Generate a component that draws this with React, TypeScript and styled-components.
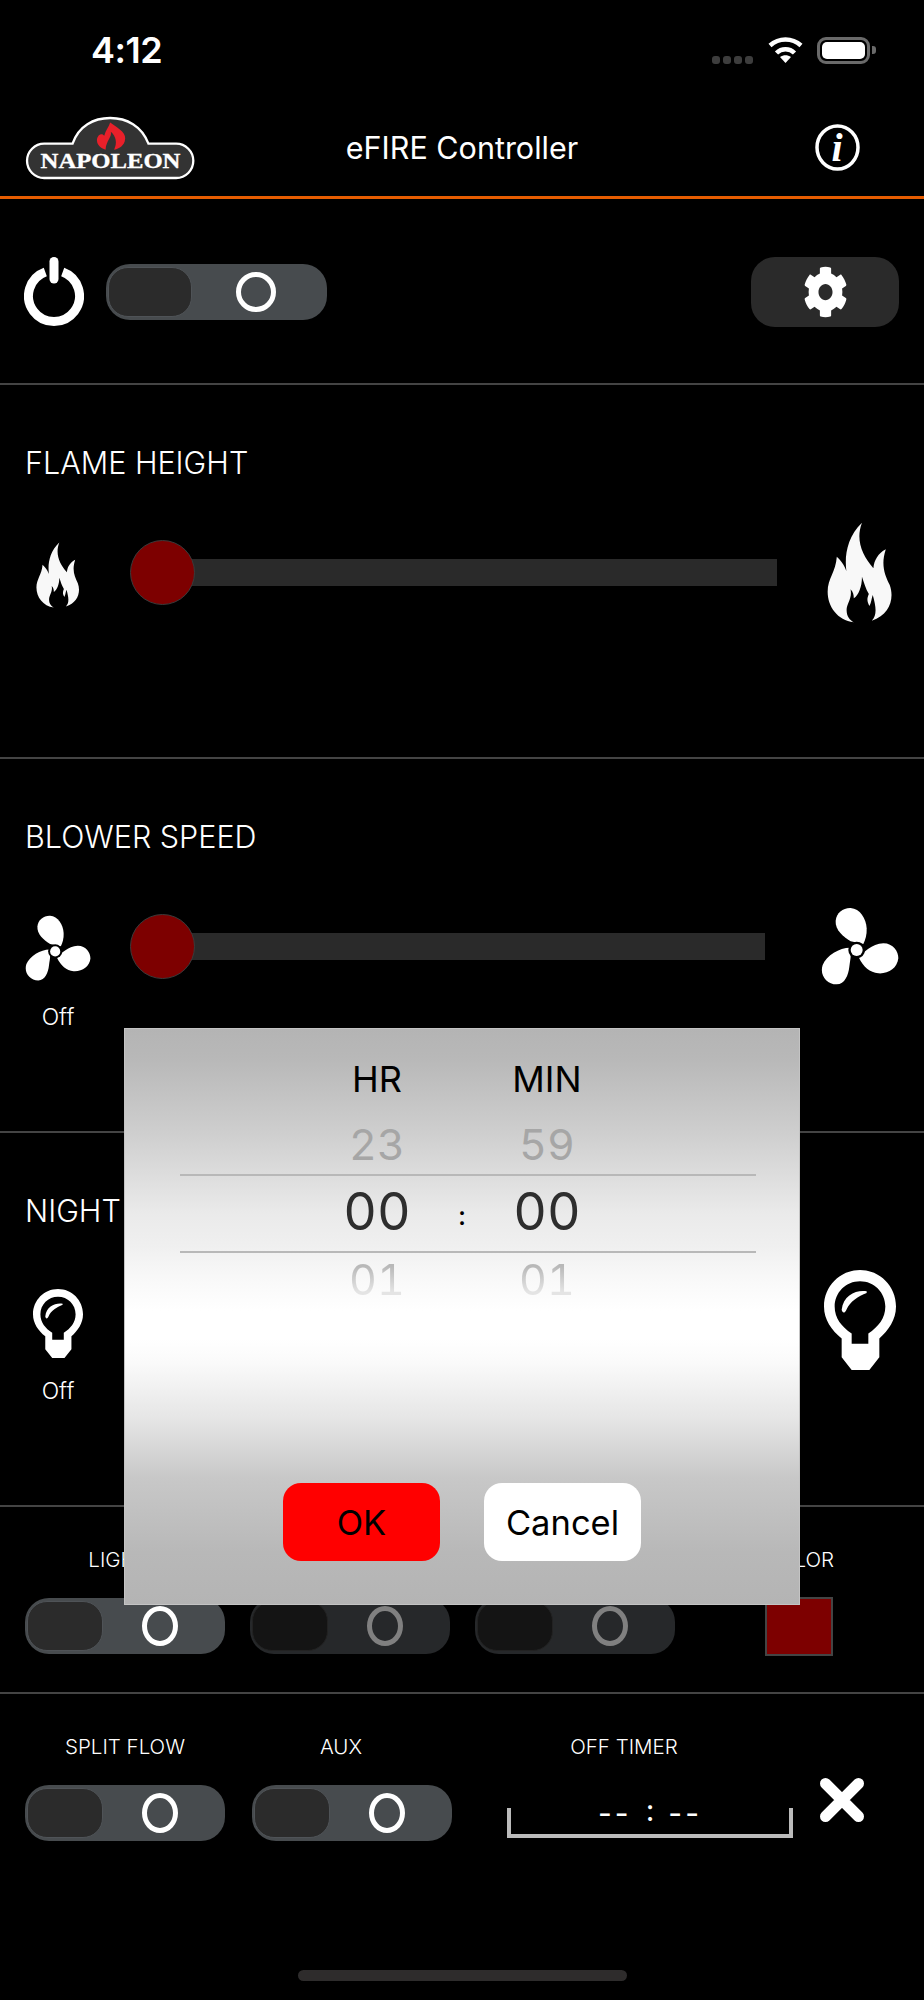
// App.tsx

import React from 'react'
import styled, { createGlobalStyle } from 'styled-components'
import { FaCog } from 'react-icons/fa'

const GlobalStyle = createGlobalStyle`
  html, body {
    margin: 0;
    padding: 0;
    background: #000;
  }
  * {
    box-sizing: border-box;
  }
`

const Screen = styled.div`
  position: relative;
  width: 924px;
  height: 2000px;
  overflow: hidden;
  background: #000;
  color: #fff;
  font-family: Inter, 'Liberation Sans', sans-serif;
`

/* status bar */

const StatusBar = styled.div`
  display: flex;
  align-items: center;
  height: 100px;
  padding: 0 48px 0 91px;
`

const Time = styled.div`
  font-size: 36px;
  font-weight: 600;
  letter-spacing: -0.5px;
`

const StatusIcons = styled.div`
  display: flex;
  align-items: center;
  margin-left: auto;
`

const SignalDots = styled.div`
  display: flex;
  gap: 3px;
  margin: 19px 15px 0 0;
`

const SignalDot = styled.span`
  width: 8px;
  height: 8px;
  border-radius: 3px;
  background: #3d3d3d;
`

const Battery = styled.div`
  display: flex;
  align-items: center;
  margin-left: 14px;
`

const BatteryBody = styled.div`
  width: 53px;
  height: 27px;
  padding: 2px;
  border: 3px solid #6a6a6a;
  border-radius: 9px;
`

const BatteryFill = styled.div`
  height: 100%;
  border-radius: 5px;
  background: #fff;
`

const BatteryCap = styled.div`
  width: 4px;
  height: 8px;
  margin-left: 2px;
  border-radius: 0 3px 3px 0;
  background: #6a6a6a;
`

/* header */

const Header = styled.header`
  display: grid;
  grid-template-columns: 1fr auto 1fr;
  align-items: center;
  height: 99px;
  padding-bottom: 1px;
  border-bottom: 3px solid #e65c00;
`

const LogoBox = styled.svg`
  display: block;
  width: 172px;
  height: 64px;
  margin-left: 25px;
`

const Title = styled.div`
  font-size: 30.5px;
  font-weight: 400;
`

const InfoIcon = styled.svg`
  justify-self: end;
  width: 45px;
  height: 47px;
  margin-right: 64px;
`

/* sections */

const PowerSection = styled.section`
  display: flex;
  align-items: center;
  gap: 22px;
  height: 186px;
  padding: 1px 25px 0 24px;
  border-bottom: 2px solid #444;
`

const PowerIcon = styled.svg`
  width: 60px;
  height: 70px;
`

const GearButton = styled.div`
  display: flex;
  align-items: center;
  justify-content: center;
  width: 148px;
  height: 70px;
  margin-left: auto;
  border-radius: 24px;
  background: #2a2a2a;
  color: #fff;
`

const GearIcon = styled(FaCog)`
  width: 45px;
  height: 52px;
`

const SliderSection = styled.section`
  height: 374px;
  padding-top: 60px;
  border-bottom: 2px solid #444;
`

const SectionTitle = styled.h2`
  margin: 0 0 0 25px;
  font-size: 30.5px;
  font-weight: 300;
  line-height: 36px;
  white-space: nowrap;
`

const SliderRow = styled.div`
  display: flex;
  align-items: center;
  height: 100px;
  margin-top: 41px;
`

const SideIcon = styled.div<{ $w: number; $drop?: number }>`
  display: flex;
  align-items: center;
  justify-content: center;
  flex: none;
  width: ${p => p.$w}px;
  padding-top: ${p => p.$drop || 0}px;
`

const Slider = styled.div<{ $end: number }>`
  position: relative;
  flex: 1;
  height: 27px;
  margin: 0 ${p => p.$end}px 0 40px;
  background: #2a2a2a;
`

const SliderKnob = styled.div`
  position: absolute;
  top: -19px;
  left: -26px;
  width: 65px;
  height: 65px;
  border: 1px solid #3a3a3a;
  border-radius: 50%;
  background: #7d0000;
`

const StateLabel = styled.div`
  width: 116px;
  margin-top: 7px;
  font-size: 23px;
  font-weight: 300;
  line-height: 28px;
  text-align: center;
`

/* toggles */

const ToggleTrack = styled.div<{ $w: number; $dim?: boolean }>`
  display: flex;
  align-items: center;
  width: ${p => p.$w}px;
  height: 56px;
  padding: 3px 8px 3px 2px;
  border-radius: 24px;
  background: ${p => (p.$dim ? '#26282a' : '#474b4e')};
`

const ToggleKnob = styled.div<{ $w: number; $dim?: boolean }>`
  flex: none;
  width: ${p => p.$w}px;
  height: 100%;
  border: 1px solid ${p => (p.$dim ? '#222' : '#4f5357')};
  border-radius: 20px;
  background: ${p => (p.$dim ? '#141414' : '#2b2b2b')};
`

const ToggleSlot = styled.div`
  display: flex;
  flex: 1;
  align-items: center;
  justify-content: center;
`

const ToggleRing = styled.div<{ $w: number; $dim?: boolean }>`
  width: ${p => p.$w}px;
  height: 40px;
  border: 5px solid ${p => (p.$dim ? '#808080' : '#fff')};
  border-radius: 50%;
`

const ToggleRow = styled.section`
  display: flex;
  gap: 25px;
  height: 187px;
  padding: 41px 0 0 25px;
  border-bottom: 2px solid #444;
`

const BottomRow = styled.section`
  display: flex;
  gap: 27px;
  padding: 41px 0 0 25px;
`

const Control = styled.div`
  display: flex;
  flex-direction: column;
  align-items: center;
  gap: 26px;
`

const ControlLabel = styled.div<{ $shift?: number }>`
  height: 24px;
  padding-right: ${p => p.$shift || 0}px;
  font-size: 20.5px;
  font-weight: 300;
  line-height: 24px;
  white-space: nowrap;
`

const ColorControl = styled(Control)`
  gap: 25px;
  width: 68px;
  margin-left: 65px;
`

const ColorSwatch = styled.div`
  width: 68px;
  height: 59px;
  border: 2px solid #444;
  background: #7d0000;
`

const TimerControl = styled.div`
  display: flex;
  flex-direction: column;
  margin-left: 28px;
`

const TimerLabel = styled(ControlLabel)`
  padding-right: 52px;
  text-align: center;
`

const TimerBracket = styled.div`
  display: flex;
  align-items: flex-start;
  justify-content: center;
  width: 286px;
  height: 30px;
  margin-top: 49px;
  border: solid #bbb;
  border-width: 0 4px 4px;
`

const TimerValue = styled.div`
  display: flex;
  gap: 14px;
  margin-top: -13px;
  font-size: 30px;
  font-weight: 400;
  line-height: 36px;
`

const TimerDigits = styled.span`
  letter-spacing: 3px;
`

const TimerColon = styled.span`
  margin-top: -3px;
`

const CloseIcon = styled.svg`
  flex: none;
  width: 44px;
  height: 44px;
  margin: 43px 0 0 0;
`

const HomeBar = styled.div`
  width: 329px;
  height: 11px;
  margin: 129px auto 0;
  border-radius: 6px;
  background: #2e2c2c;
`

/* time picker dialog */

const Dialog = styled.div`
  position: absolute;
  top: 1028px;
  left: 124px;
  width: 676px;
  height: 577px;
  padding-top: 25px;
  border: 1px solid #c4c4c4;
  background: linear-gradient(
    #b4b4b4 0%,
    #b8b8b8 5%,
    #cfcfcf 18.5%,
    #eaeaea 32%,
    #f0f0f0 38%,
    #f8f8f8 43%,
    #fff 49%,
    #fff 54%,
    #fafafa 58%,
    #e5e5e5 68%,
    #c8c8c8 78%,
    #b8b8b8 91%,
    #b4b4b4 100%
  );
  color: #000;
`

const PickerRow = styled.div<{ $h: number }>`
  display: grid;
  grid-template-columns: 120px 50px 120px;
  align-items: center;
  width: 576px;
  height: ${p => p.$h}px;
  margin-left: 55px;
  padding-left: 137px;
  text-align: center;
  font-variant-numeric: tabular-nums;
`

const HeadRow = styled(PickerRow)`
  margin-bottom: 13px;
`

const PreviousRow = styled(PickerRow)`
  padding-bottom: 3px;
`

const SelectedRow = styled(PickerRow)`
  padding-bottom: 4px;
  border: solid #b8b8b8;
  border-width: 2px 0;
`

const PickerHead = styled.div`
  font-size: 36px;
  font-weight: 400;
`

const FadedNumber = styled.div`
  font-size: 43px;
  font-weight: 400;
  color: #a6a6a6;
`

const NextNumber = styled(FadedNumber)`
  background: linear-gradient(#b8b8b8 25%, #e4e4e4 75%);
  background-clip: text;
  color: transparent;
`

const SelectedNumber = styled.div`
  font-size: 52px;
  font-weight: 400;
  color: #2e2e2e;
`

const PickerColon = styled.div`
  padding-top: 8px;
  font-size: 26px;
  font-weight: 500;
`

const DialogButtons = styled.div`
  display: flex;
  justify-content: center;
  gap: 44px;
  margin-top: 178px;
`

const DialogButton = styled.div<{ $primary?: boolean }>`
  display: flex;
  align-items: center;
  justify-content: center;
  width: 157px;
  height: 78px;
  border-radius: 18px;
  background: ${p => (p.$primary ? '#ff0000' : '#fff')};
  font-size: 34.5px;
  font-weight: 400;
`

/* drawings */

const Logo = () => (
  <LogoBox viewBox='45 48 515 194'>
    <path
      d='M100 132 H186 C204 78 250 54 300 54 C350 54 396 78 416 132 H500 A52 52 0 0 1 500 236 H100 A52 52 0 0 1 100 132 Z'
      fill='#333'
      stroke='#fff'
      strokeWidth='7'
    />
    <path
      d='M300 68 C330 90 352 100 344 125 C338 142 322 148 312 150 C322 130 318 110 302 96 C306 112 288 122 286 150 C272 146 258 136 260 118 C262 104 276 98 282 108 C286 92 296 82 300 68 Z'
      fill='#e8202a'
    />
    <text
      x='301'
      y='205'
      textAnchor='middle'
      textLength='424'
      lengthAdjust='spacingAndGlyphs'
      fontFamily="'Liberation Serif', serif"
      fontWeight='700'
      fontSize='66'
      fill='#fff'
      stroke='#fff'
      strokeWidth='1'
    >
      NAPOLEON
    </text>
  </LogoBox>
)

const Flame = ({ w, h }: { w: number; h: number }) => (
  <svg width={w} height={h} viewBox='108 66 202 303' preserveAspectRatio='none'>
    <path
      d='M215 68 C195 120 215 165 250 205 C252 180 265 160 288 148 C272 195 285 225 300 255 C315 295 300 345 245 362 C262 345 258 320 248 285 C244 295 244 308 238 318 C230 305 230 295 236 282 C226 265 222 250 215 230 C215 260 205 285 190 295 C190 285 188 275 180 268 C186 295 168 310 168 330 C168 350 178 360 190 367 C140 360 110 320 110 275 C110 235 135 215 138 170 C160 190 172 215 172 238 C160 190 160 120 215 68 Z'
      fill='#f8f8f8'
    />
  </svg>
)

const Fan = ({ w, h }: { w: number; h: number }) => (
  <svg width={w} height={h} viewBox='123 81 234 234' preserveAspectRatio='none'>
    <path d='M212 184 C190 170 165 150 167 122 C169 98 190 83 212 84 C240 86 258 115 260 145 C261 165 256 180 250 192 Z' fill='#fff' />
    <path d='M236 232 C250 218 275 192 310 190 C340 190 355 215 355 235 C352 265 325 282 295 280 C270 278 250 262 236 232 Z' fill='#fff' />
    <path d='M212 203 C180 202 140 225 128 255 C118 285 140 313 170 313 C195 312 205 285 208 260 C210 245 212 235 212 228 Z' fill='#fff' />
    <circle cx='230' cy='210' r='25' fill='#000' />
    <circle cx='230' cy='210' r='18' fill='#fff' />
  </svg>
)

const Bulb = ({ w, h }: { w: number; h: number }) => (
  <svg width={w} height={h} viewBox='72 62 216 296' preserveAspectRatio='none'>
    <path
      fillRule='evenodd'
      d='M125 265 C95 240 72 210 72 170 C72 110 120 62 180 62 C240 62 288 110 288 170 C288 210 265 240 238 265 V320 L208 358 H155 L125 320 Z M155 250 C125 230 104 205 104 170 C104 128 138 95 180 95 C222 95 256 128 256 170 C256 205 235 230 205 250 V280 H155 Z'
      fill='#fff'
    />
    <path d='M200 125 C170 120 130 135 125 180 C128 192 135 190 140 178 C150 155 175 140 200 130 Z' fill='#fff' />
  </svg>
)

const Toggle = ({
  width = 200,
  knob = 76,
  ring = 36,
  dim
}: {
  width?: number
  knob?: number
  ring?: number
  dim?: boolean
}) => (
  <ToggleTrack $w={width} $dim={dim}>
    <ToggleKnob $w={knob} $dim={dim} />
    <ToggleSlot>
      <ToggleRing $w={ring} $dim={dim} />
    </ToggleSlot>
  </ToggleTrack>
)

const App: React.FC = () => {
  return (
    <Screen>
      <GlobalStyle />

      <StatusBar>
        <Time>4:12</Time>
        <StatusIcons>
          <SignalDots>
            {[0, 1, 2, 3].map(i => (
              <SignalDot key={i} />
            ))}
          </SignalDots>
          <svg width='35' height='26' viewBox='0 0 35 26'>
            <path d='M2 8.5 C11 0.5 24 0.5 33 8.5' fill='none' stroke='#fff' strokeWidth='4.5' />
            <path d='M8.5 16 C13.5 11 21.5 11 26.5 16' fill='none' stroke='#fff' strokeWidth='4.5' />
            <path d='M17.5 26 L12 20 C15.5 17.5 19.5 17.5 23 20 Z' fill='#fff' />
          </svg>
          <Battery>
            <BatteryBody>
              <BatteryFill />
            </BatteryBody>
            <BatteryCap />
          </Battery>
        </StatusIcons>
      </StatusBar>

      <Header>
        <Logo />
        <Title>eFIRE Controller</Title>
        <InfoIcon viewBox='0 0 45 47'>
          <ellipse cx='22.5' cy='23.5' rx='20.5' ry='21.5' fill='none' stroke='#fff' strokeWidth='3.5' />
          <text
            x='22'
            y='37'
            textAnchor='middle'
            fontFamily="'Liberation Serif', serif"
            fontStyle='italic'
            fontWeight='700'
            fontSize='40'
            fill='#fff'
          >
            i
          </text>
        </InfoIcon>
      </Header>

      <PowerSection>
        <PowerIcon viewBox='0 0 60 70'>
          <path d='M21.3 15 A25.5 25.5 0 1 0 38.7 15' fill='none' stroke='#fff' strokeWidth='9' />
          <line x1='30' y1='4.5' x2='30' y2='22' stroke='#fff' strokeWidth='9' strokeLinecap='round' />
        </PowerIcon>
        <Toggle width={221} knob={84} ring={40} />
        <GearButton>
          <GearIcon preserveAspectRatio='none' />
        </GearButton>
      </PowerSection>

      <SliderSection>
        <SectionTitle>FLAME HEIGHT</SectionTitle>
        <SliderRow>
          <SideIcon $w={116} $drop={5}>
            <Flame w={44} h={66} />
          </SideIcon>
          <Slider $end={19}>
            <SliderKnob />
          </Slider>
          <SideIcon $w={128}>
            <Flame w={66} h={101} />
          </SideIcon>
        </SliderRow>
      </SliderSection>

      <SliderSection>
        <SectionTitle>BLOWER SPEED</SectionTitle>
        <SliderRow>
          <SideIcon $w={116} $drop={4}>
            <Fan w={66} h={66} />
          </SideIcon>
          <Slider $end={31}>
            <SliderKnob />
          </Slider>
          <SideIcon $w={128}>
            <Fan w={78} h={78} />
          </SideIcon>
        </SliderRow>
        <StateLabel>Off</StateLabel>
      </SliderSection>

      <SliderSection>
        <SectionTitle>NIGHT LIGHT</SectionTitle>
        <SliderRow>
          <SideIcon $w={116} $drop={6}>
            <Bulb w={50} h={69} />
          </SideIcon>
          <Slider $end={31}>
            <SliderKnob />
          </Slider>
          <SideIcon $w={128}>
            <Bulb w={72} h={100} />
          </SideIcon>
        </SliderRow>
        <StateLabel>Off</StateLabel>
      </SliderSection>

      <ToggleRow>
        <Control>
          <ControlLabel>LIGHTS</ControlLabel>
          <Toggle />
        </Control>
        <Control>
          <ControlLabel />
          <Toggle dim />
        </Control>
        <Control>
          <ControlLabel />
          <Toggle dim />
        </Control>
        <ColorControl>
          <ControlLabel>COLOR</ControlLabel>
          <ColorSwatch />
        </ColorControl>
      </ToggleRow>

      <BottomRow>
        <Control>
          <ControlLabel>SPLIT FLOW</ControlLabel>
          <Toggle />
        </Control>
        <Control>
          <ControlLabel $shift={22}>AUX</ControlLabel>
          <Toggle />
        </Control>
        <TimerControl>
          <TimerLabel>OFF TIMER</TimerLabel>
          <TimerBracket>
            <TimerValue>
              <TimerDigits>--</TimerDigits>
              <TimerColon>:</TimerColon>
              <TimerDigits>--</TimerDigits>
            </TimerValue>
          </TimerBracket>
        </TimerControl>
        <CloseIcon viewBox='0 0 44 44'>
          <path d='M5.5 5.5 L38.5 38.5 M38.5 5.5 L5.5 38.5' stroke='#fff' strokeWidth='11' strokeLinecap='round' />
        </CloseIcon>
      </BottomRow>

      <HomeBar />

      <Dialog>
        <HeadRow $h={50}>
          <PickerHead>HR</PickerHead>
          <span />
          <PickerHead>MIN</PickerHead>
        </HeadRow>
        <PreviousRow $h={57}>
          <FadedNumber>23</FadedNumber>
          <span />
          <FadedNumber>59</FadedNumber>
        </PreviousRow>
        <SelectedRow $h={79}>
          <SelectedNumber>00</SelectedNumber>
          <PickerColon>:</PickerColon>
          <SelectedNumber>00</SelectedNumber>
        </SelectedRow>
        <PickerRow $h={52}>
          <NextNumber>01</NextNumber>
          <span />
          <NextNumber>01</NextNumber>
        </PickerRow>
        <DialogButtons>
          <DialogButton $primary>OK</DialogButton>
          <DialogButton>Cancel</DialogButton>
        </DialogButtons>
      </Dialog>
    </Screen>
  )
}

export default App
